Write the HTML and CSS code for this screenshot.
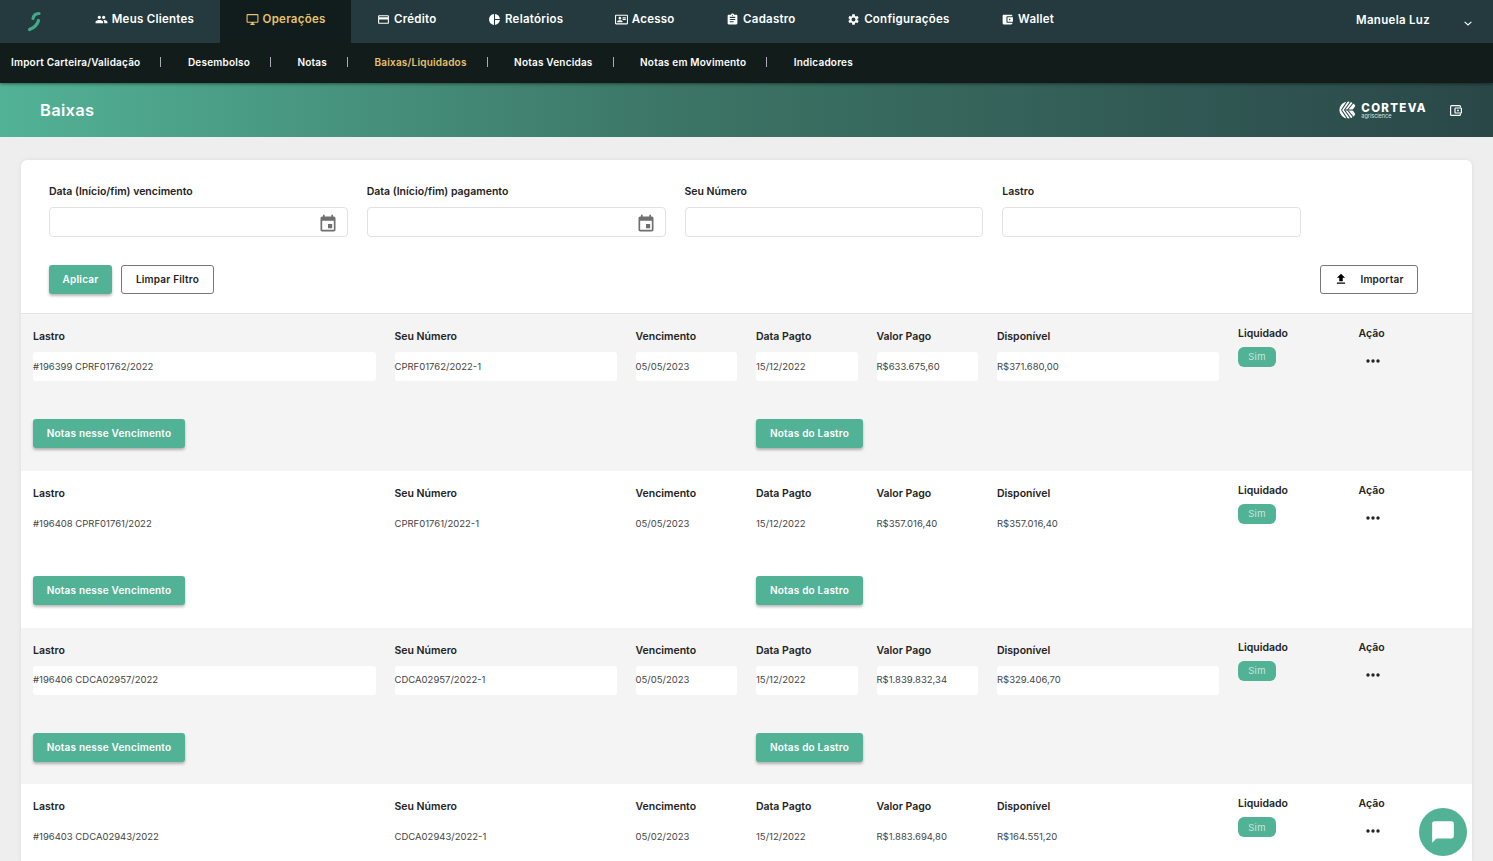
FILE: index.html
```html
<!DOCTYPE html>
<html lang="pt-BR">
	<head>
		<meta charset="UTF-8" />
		<title>Baixas</title>
		<link rel="stylesheet" href="styles.css">
	</head>

	<body>
		<svg class="icon-defs" width="0" height="0">
			<symbol id="i-people" viewBox="0 0 24 24"><path d="M16 11c1.66 0 2.99-1.34 2.99-3S17.66 5 16 5c-1.66 0-3 1.34-3 3s1.34 3 3 3zm-8 0c1.66 0 2.99-1.34 2.99-3S9.66 5 8 5C6.34 5 5 6.34 5 8s1.34 3 3 3zm0 2c-2.33 0-7 1.17-7 3.5V19h14v-2.5c0-2.33-4.67-3.5-7-3.5zm8 0c-.29 0-.62.02-.97.05 1.16.84 1.97 1.97 1.97 3.45V19h6v-2.5c0-2.33-4.67-3.5-7-3.5z"/></symbol>
			<symbol id="i-desktop" viewBox="0 0 24 24"><path d="M21 2H3c-1.1 0-2 .9-2 2v12c0 1.1.9 2 2 2h7v2H8v2h8v-2h-2v-2h7c1.1 0 2-.9 2-2V4c0-1.1-.9-2-2-2zm0 14H3V4h18v12z"/></symbol>
			<symbol id="i-card" viewBox="0 0 24 24"><path d="M20 4H4c-1.11 0-1.99.89-1.99 2L2 18c0 1.11.89 2 2 2h16c1.11 0 2-.89 2-2V6c0-1.11-.89-2-2-2zm0 14H4v-6h16v6zm0-10H4V6h16v2z"/></symbol>
			<symbol id="i-pie" viewBox="0 0 24 24"><path d="M11 2v20c-5.07-.5-9-4.79-9-10s3.93-9.5 9-10zm2.03 0v8.99H22c-.47-4.74-4.24-8.52-8.97-8.99zm0 11.01V22c4.74-.47 8.5-4.25 8.97-8.99h-8.97z"/></symbol>
			<symbol id="i-contact" viewBox="0 0 24 24"><path d="M22 3H2C.9 3 0 3.9 0 5v14c0 1.1.9 2 2 2h20c1.1 0 2-.9 2-2V5c0-1.1-.9-2-2-2zm0 16H2V5h20v14zM14 17v-1.25c0-1.66-3.34-2.5-5-2.5s-5 .84-5 2.5V17h10zM9 12c1.38 0 2.5-1.12 2.5-2.5S10.38 7 9 7 6.5 8.12 6.5 9.5 7.62 12 9 12zm5-4h6v2h-6zm0 3h6v2h-6z"/></symbol>
			<symbol id="i-assignment" viewBox="0 0 24 24"><path d="M19 3h-4.18C14.4 1.84 13.3 1 12 1c-1.3 0-2.4.84-2.82 2H5c-1.1 0-2 .9-2 2v14c0 1.1.9 2 2 2h14c1.1 0 2-.9 2-2V5c0-1.1-.9-2-2-2zm-7 0c.55 0 1 .45 1 1s-.45 1-1 1-1-.45-1-1 .45-1 1-1zm2 14H7v-2h7v2zm3-4H7v-2h10v2zm0-4H7V7h10v2z"/></symbol>
			<symbol id="i-settings" viewBox="0 0 24 24"><path d="M19.14 12.94c.04-.3.06-.61.06-.94 0-.32-.02-.64-.07-.94l2.03-1.58c.18-.14.23-.41.12-.61l-1.92-3.32c-.12-.22-.37-.29-.59-.22l-2.39.96c-.5-.38-1.03-.7-1.62-.94l-.36-2.54c-.04-.24-.24-.41-.48-.41h-3.84c-.24 0-.43.17-.47.41l-.36 2.54c-.59.24-1.13.57-1.62.94l-2.39-.96c-.22-.08-.47 0-.59.22L2.74 8.87c-.12.21-.08.47.12.61l2.03 1.58c-.05.3-.09.63-.09.94s.02.64.07.94l-2.03 1.58c-.18.14-.23.41-.12.61l1.92 3.32c.12.22.37.29.59.22l2.39-.96c.5.38 1.03.7 1.62.94l.36 2.54c.05.24.24.41.48.41h3.84c.24 0 .44-.17.47-.41l.36-2.54c.59-.24 1.13-.56 1.62-.94l2.39.96c.22.08.47 0 .59-.22l1.92-3.32c.12-.22.07-.47-.12-.61l-2.01-1.58zM12 15.6c-1.98 0-3.6-1.62-3.6-3.6s1.62-3.6 3.6-3.6 3.6 1.62 3.6 3.6-1.62 3.6-3.6 3.6z"/></symbol>
			<symbol id="i-wallet" viewBox="0 0 24 24"><path d="M21 18v1c0 1.1-.9 2-2 2H5c-1.11 0-2-.9-2-2V5c0-1.1.89-2 2-2h14c1.1 0 2 .9 2 2v1h-9c-1.11 0-2 .9-2 2v8c0 1.1.89 2 2 2h9zm-9-2h10V8H12v8zm4-2.5c-.83 0-1.5-.67-1.5-1.5s.67-1.5 1.5-1.5 1.5.67 1.5 1.5-.67 1.5-1.5 1.5z"/></symbol>
			<symbol id="i-event" viewBox="0 0 24 24"><path d="M17 12h-5v5h5v-5zM16 1v2H8V1H6v2H5c-1.11 0-1.99.9-1.99 2L3 19c0 1.1.89 2 2 2h14c1.1 0 2-.9 2-2V5c0-1.1-.9-2-2-2h-1V1h-2zm3 18H5V8h14v11z"/></symbol>
			<symbol id="i-more" viewBox="0 0 14 4"><circle cx="2" cy="2" r="1.7"/><circle cx="7" cy="2" r="1.7"/><circle cx="12" cy="2" r="1.7"/></symbol>
		</svg>

		<div class="wrapper">
			<header class="main-header">
				<nav class="top-nav">
					<a class="top-nav__logo">
						<svg width="14" height="21" viewBox="0 0 14 21"><g fill="none" stroke="#43a98c" stroke-width="3.2" stroke-linecap="round"><path d="M12 2.5Q7 2.5 6 7.5"/><path d="M11.5 9.5Q10 15.5 2.5 18.5"/></g></svg>
					</a>
					<a class="top-nav__item"><svg class="top-nav__icon"><use href="#i-people"/></svg>Meus Clientes</a>
					<a class="top-nav__item top-nav__item_active"><svg class="top-nav__icon"><use href="#i-desktop"/></svg>Operações</a>
					<a class="top-nav__item"><svg class="top-nav__icon"><use href="#i-card"/></svg>Crédito</a>
					<a class="top-nav__item"><svg class="top-nav__icon"><use href="#i-pie"/></svg>Relatórios</a>
					<a class="top-nav__item"><svg class="top-nav__icon"><use href="#i-contact"/></svg>Acesso</a>
					<a class="top-nav__item"><svg class="top-nav__icon"><use href="#i-assignment"/></svg>Cadastro</a>
					<a class="top-nav__item"><svg class="top-nav__icon"><use href="#i-settings"/></svg>Configurações</a>
					<a class="top-nav__item"><svg class="top-nav__icon"><use href="#i-wallet"/></svg>Wallet</a>
					<div class="top-nav__user">
						<span>Manuela Luz</span>
						<svg width="8" height="5" viewBox="0 0 8 5"><path fill="none" stroke="#fff" stroke-width="1.1" d="M.6.8 4 4 7.4.8"/></svg>
					</div>
				</nav>
				<nav class="sub-nav">
					<a class="sub-nav__item">Import Carteira/Validação</a>
					<a class="sub-nav__item">Desembolso</a>
					<a class="sub-nav__item">Notas</a>
					<a class="sub-nav__item sub-nav__item_active">Baixas/Liquidados</a>
					<a class="sub-nav__item">Notas Vencidas</a>
					<a class="sub-nav__item">Notas em Movimento</a>
					<a class="sub-nav__item">Indicadores</a>
				</nav>
			</header>

			<section class="page-title">
				<h1>Baixas</h1>
				<div class="brand">
					<svg class="brand__mark" width="18" height="18" viewBox="0 0 18 18">
						<circle cx="9" cy="9" r="8.6" fill="#fff"/>
						<g fill="none" stroke="#2c4f4d" stroke-width="1.1">
							<path d="M5.5 9H18"/>
							<path d="M2.5 9 8.5 0M2.5 9 8.5 18"/>
							<path d="M5.5 9 12 0M5.5 9 12 18"/>
							<path d="M8.5 9 15 1M8.5 9 15 17"/>
						</g>
						<path fill="#2c4f4d" d="M18 2.5 13.5 9 18 15.5z"/>
					</svg>
					<div class="brand__text">
						<span class="brand__name">CORTEVA</span>
						<span class="brand__sub">agriscience</span>
					</div>
				</div>
				<svg class="page-title__wallet" width="12" height="11" viewBox="0 0 12 11"><g fill="none" stroke="#fff" stroke-width="1.2"><path d="M10.4 2.4V1.6q0-1-1-1H1.6q-1 0-1 1v7.8q0 1 1 1h7.8q1 0 1-1V8.6"/><rect x="5" y="3" width="6.4" height="5" rx=".6"/></g><circle cx="8" cy="5.5" r=".9" fill="#fff"/></svg>
			</section>

			<main class="main-content">
				<div class="panel">
					<form class="filter">
						<div class="filter__fields">
							<div class="field">
								<label class="field__label">Data (Início/fim) vencimento</label>
								<div class="field__input"><svg class="field__icon"><use href="#i-event"/></svg></div>
							</div>
							<div class="field">
								<label class="field__label">Data (Início/fim) pagamento</label>
								<div class="field__input"><svg class="field__icon"><use href="#i-event"/></svg></div>
							</div>
							<div class="field">
								<label class="field__label">Seu Número</label>
								<div class="field__input"></div>
							</div>
							<div class="field">
								<label class="field__label">Lastro</label>
								<div class="field__input"></div>
							</div>
						</div>
						<div class="filter__actions">
							<a class="btn btn_primary btn_apply">Aplicar</a>
							<a class="btn btn_outline btn_clear">Limpar Filtro</a>
							<a class="btn btn_outline btn_import">
								<svg width="14" height="14" viewBox="0 0 24 24"><path d="M9 16h6v-6h4l-7-7-7 7h4zm-4 2h14v2H5z"/></svg>
								Importar
							</a>
						</div>
					</form>

					<article class="record record_shaded">
						<div class="record__cell span-3"><span class="record__label">Lastro</span><span class="record__value">#196399 CPRF01762/2022</span></div>
						<div class="record__cell span-2"><span class="record__label">Seu Número</span><span class="record__value">CPRF01762/2022-1</span></div>
						<div class="record__cell"><span class="record__label">Vencimento</span><span class="record__value">05/05/2023</span></div>
						<div class="record__cell"><span class="record__label">Data Pagto</span><span class="record__value">15/12/2022</span></div>
						<div class="record__cell"><span class="record__label">Valor Pago</span><span class="record__value">R$633.675,60</span></div>
						<div class="record__cell span-2"><span class="record__label">Disponível</span><span class="record__value">R$371.680,00</span></div>
						<div class="record__cell record__cell_raised"><span class="record__label">Liquidado</span><span class="pill">Sim</span></div>
						<div class="record__cell record__cell_raised"><span class="record__label">Ação</span><svg class="record__more"><use href="#i-more"/></svg></div>
						<div class="record__actions">
							<a class="btn btn_primary btn_notes">Notas nesse Vencimento</a>
							<a class="btn btn_primary btn_lastro">Notas do Lastro</a>
						</div>
					</article>

					<article class="record">
						<div class="record__cell span-3"><span class="record__label">Lastro</span><span class="record__value">#196408 CPRF01761/2022</span></div>
						<div class="record__cell span-2"><span class="record__label">Seu Número</span><span class="record__value">CPRF01761/2022-1</span></div>
						<div class="record__cell"><span class="record__label">Vencimento</span><span class="record__value">05/05/2023</span></div>
						<div class="record__cell"><span class="record__label">Data Pagto</span><span class="record__value">15/12/2022</span></div>
						<div class="record__cell"><span class="record__label">Valor Pago</span><span class="record__value">R$357.016,40</span></div>
						<div class="record__cell span-2"><span class="record__label">Disponível</span><span class="record__value">R$357.016,40</span></div>
						<div class="record__cell record__cell_raised"><span class="record__label">Liquidado</span><span class="pill">Sim</span></div>
						<div class="record__cell record__cell_raised"><span class="record__label">Ação</span><svg class="record__more"><use href="#i-more"/></svg></div>
						<div class="record__actions">
							<a class="btn btn_primary btn_notes">Notas nesse Vencimento</a>
							<a class="btn btn_primary btn_lastro">Notas do Lastro</a>
						</div>
					</article>

					<article class="record record_shaded">
						<div class="record__cell span-3"><span class="record__label">Lastro</span><span class="record__value">#196406 CDCA02957/2022</span></div>
						<div class="record__cell span-2"><span class="record__label">Seu Número</span><span class="record__value">CDCA02957/2022-1</span></div>
						<div class="record__cell"><span class="record__label">Vencimento</span><span class="record__value">05/05/2023</span></div>
						<div class="record__cell"><span class="record__label">Data Pagto</span><span class="record__value">15/12/2022</span></div>
						<div class="record__cell"><span class="record__label">Valor Pago</span><span class="record__value">R$1.839.832,34</span></div>
						<div class="record__cell span-2"><span class="record__label">Disponível</span><span class="record__value">R$329.406,70</span></div>
						<div class="record__cell record__cell_raised"><span class="record__label">Liquidado</span><span class="pill">Sim</span></div>
						<div class="record__cell record__cell_raised"><span class="record__label">Ação</span><svg class="record__more"><use href="#i-more"/></svg></div>
						<div class="record__actions">
							<a class="btn btn_primary btn_notes">Notas nesse Vencimento</a>
							<a class="btn btn_primary btn_lastro">Notas do Lastro</a>
						</div>
					</article>

					<article class="record record_last">
						<div class="record__cell span-3"><span class="record__label">Lastro</span><span class="record__value">#196403 CDCA02943/2022</span></div>
						<div class="record__cell span-2"><span class="record__label">Seu Número</span><span class="record__value">CDCA02943/2022-1</span></div>
						<div class="record__cell"><span class="record__label">Vencimento</span><span class="record__value">05/02/2023</span></div>
						<div class="record__cell"><span class="record__label">Data Pagto</span><span class="record__value">15/12/2022</span></div>
						<div class="record__cell"><span class="record__label">Valor Pago</span><span class="record__value">R$1.883.694,80</span></div>
						<div class="record__cell span-2"><span class="record__label">Disponível</span><span class="record__value">R$164.551,20</span></div>
						<div class="record__cell record__cell_raised"><span class="record__label">Liquidado</span><span class="pill">Sim</span></div>
						<div class="record__cell record__cell_raised"><span class="record__label">Ação</span><svg class="record__more"><use href="#i-more"/></svg></div>
					</article>
				</div>
			</main>
		</div>

		<a class="chat-button">
			<svg width="26" height="26" viewBox="0 0 24 24"><path fill="#fff" d="M20 2H4c-1.1 0-2 .9-2 2v18l4-4h14c1.1 0 2-.9 2-2V4c0-1.1-.9-2-2-2z"/></svg>
		</a>
	</body>
</html>
```

FILE: styles.css
```css
html {
	box-sizing: border-box;
}

*,
*::after,
*::before {
	box-sizing: inherit;
}

html,
body {
	height: 100%;
	overflow: hidden;
}

body {
	margin: 0;
	background-color: #eee;
	color: #222;
	font-family: Inter, "Liberation Sans", sans-serif;
	font-size: 10px;
	line-height: 1.4;
}

.icon-defs {
	position: absolute;
}

.main-header {
	position: relative;
	z-index: 2;
	box-shadow: 0 1px 3px rgb(0 0 0 / 45%);
}

/* top bar */
.top-nav {
	display: flex;
	align-items: stretch;
	height: 43px;
	background-color: #243a3e;
}

.top-nav__logo {
	display: flex;
	align-items: center;
	width: 69px;
	padding: 0 0 1px 27px;
}

.top-nav__item {
	display: flex;
	align-items: center;
	gap: 4px;
	padding: 0 25.75px 4px;
	color: #fff;
	font-size: 11.5px;
	font-weight: 600;
	letter-spacing: .25px;
	white-space: nowrap;
}

.top-nav__item_active {
	background-color: #111c1c;
	color: #e8c26e;
}

.top-nav__icon {
	width: 13px;
	height: 13px;
	fill: currentColor;
}

.top-nav__user {
	display: flex;
	align-items: center;
	gap: 34px;
	margin-left: auto;
	padding: 0 21px 2px 0;
	color: #fff;
	font-size: 11.5px;
	font-weight: 600;
	letter-spacing: .3px;
}

.top-nav__user svg {
	margin-top: 5px;
}

.sub-nav {
	display: flex;
	align-items: center;
	height: 40px;
	padding: 0 0 2px 11px;
	background-color: #111c1b;
}

.sub-nav__item {
	position: relative;
	margin-right: 47.5px;
	color: #fff;
	font-size: 10px;
	font-weight: 600;
	letter-spacing: .2px;
	white-space: nowrap;
}

.sub-nav__item::after {
	content: "";
	position: absolute;
	top: 2px;
	right: -21px;
	width: 1px;
	height: 10px;
	background-color: #aab;
}

.sub-nav__item:last-child::after {
	display: none;
}

.sub-nav__item_active {
	color: #e8c26e;
}

/* page title */
.page-title {
	display: flex;
	align-items: center;
	height: 54px;
	padding: 0 31px 0 40px;
	background: linear-gradient(90deg, #52b296 0%, #3c7566 45%, #2a4748 100%);
	color: #fff;
}

.page-title h1 {
	margin: 1px 0 0;
	font-size: 16.5px;
	font-weight: 600;
	letter-spacing: .3px;
}

.brand {
	display: flex;
	align-items: center;
	gap: 4px;
	margin: -1px 0 0 auto;
}

.brand__text {
	display: flex;
	flex-direction: column;
	line-height: 1;
	margin-top: 3px;
}

.brand__name {
	font-size: 11.5px;
	font-weight: 800;
	letter-spacing: 1.3px;
}

.brand__sub {
	font-size: 5.5px;
	color: #d7e3df;
}

.page-title__wallet {
	margin-left: 23px;
}

/* content */
.main-content {
	padding: 23px 21px 0;
}

.panel {
	width: 1451px;
	background-color: #fff;
	border-radius: 6px 6px 0 0;
	box-shadow: 0 0 4px rgb(0 0 0 / 8%);
}

.filter {
	padding: 24px 54px 19px 28px;
	border-bottom: 1px solid #e4e4e4;
}

.filter__fields {
	display: grid;
	grid-template-columns: repeat(4, 298.75px);
	gap: 19px;
}

.field__label {
	display: block;
	margin-bottom: 8px;
	font-size: 10.5px;
	font-weight: 600;
	line-height: 15px;
}

.field__input {
	display: flex;
	align-items: center;
	justify-content: flex-end;
	height: 30px;
	padding: 3px 9px 0 0;
	border: 1px solid #e2e2e2;
	border-radius: 4px;
}

.field__icon {
	width: 20px;
	height: 20px;
	fill: #6f6f6f;
}

.filter__actions {
	display: flex;
	gap: 9px;
	margin-top: 28px;
}

.btn {
	display: flex;
	align-items: center;
	justify-content: center;
	height: 29px;
	padding-bottom: 1px;
	border-radius: 3px;
	font-size: 10px;
	font-weight: 600;
	letter-spacing: .2px;
	white-space: nowrap;
}

.btn_primary {
	background-color: #52b296;
	color: #fff;
	box-shadow: 0 2px 3px rgb(0 0 0 / 28%);
}

.btn_outline {
	border: 1px solid #777;
	background-color: #fff;
	color: #222;
}

.btn_apply {
	width: 63px;
}

.btn_clear {
	width: 93px;
}

.btn_import {
	gap: 12px;
	width: 98px;
	margin-left: auto;
}

.btn_notes {
	width: 152px;
}

.btn_lastro {
	width: 107px;
	margin-left: 571px;
}

/* records */
.record {
	display: grid;
	grid-template-columns: repeat(12, 101.5px);
	grid-template-rows: 51px auto;
	column-gap: 19px;
	height: 156.75px;
	padding: 16px 0 0 12px;
}

.record_shaded {
	background-color: #f4f4f4;
}

.record_last {
	height: 77px;
	grid-template-rows: 51px;
}

.record__cell {
	display: flex;
	flex-direction: column;
	align-items: flex-start;
}

.span-2 {
	grid-column: span 2;
}

.span-3 {
	grid-column: span 3;
}

.record__cell_raised {
	margin-top: -3px;
}

.record__label {
	margin-bottom: 8px;
	font-size: 10.5px;
	font-weight: 600;
	line-height: 14px;
}

.record__value {
	display: flex;
	align-items: center;
	width: 100%;
	height: 29px;
	border-radius: 3px;
	color: #444;
	font-size: 9.5px;
}

.record_shaded .record__value {
	background-color: #fff;
}

.record__actions {
	grid-column: 1 / -1;
	display: flex;
	margin-top: 38px;
}

.pill {
	display: flex;
	align-items: center;
	justify-content: center;
	width: 38px;
	height: 20px;
	margin-top: -2px;
	border-radius: 6px;
	background-color: #52b296;
	color: #e6f5ef;
	font-size: 9.5px;
	font-weight: 300;
	letter-spacing: .4px;
}

.record__more {
	width: 14px;
	height: 4px;
	margin: 10px 0 0 7px;
	fill: #222;
}

.chat-button {
	position: fixed;
	right: 26px;
	bottom: 5px;
	display: flex;
	align-items: center;
	justify-content: center;
	width: 48px;
	height: 48px;
	border-radius: 50%;
	background-color: #52b296;
}
```
